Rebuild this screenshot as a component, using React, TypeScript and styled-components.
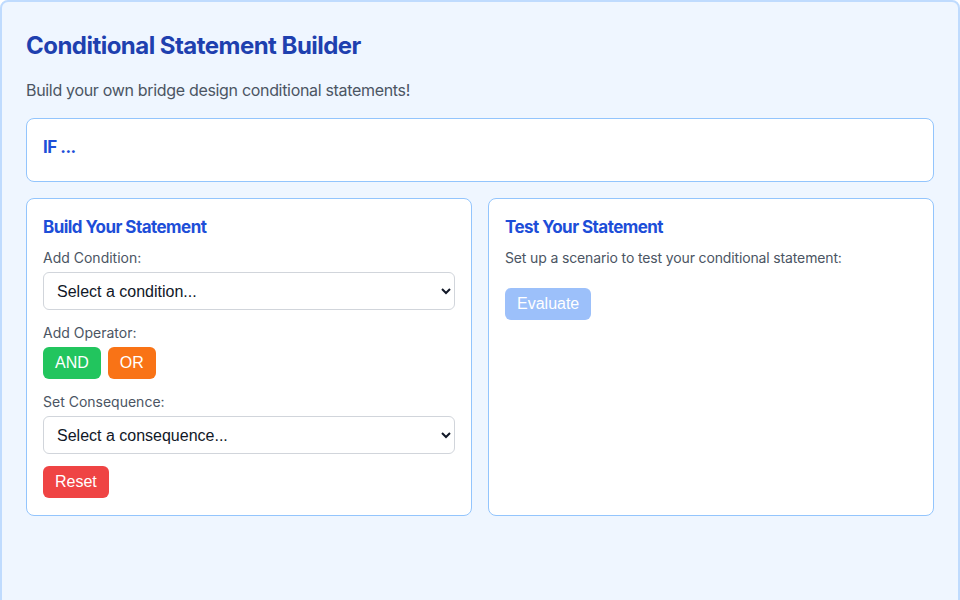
import React, {useState} from "react";
import styled, {createGlobalStyle} from "styled-components";

const GlobalStyle = createGlobalStyle`
    * { box-sizing: border-box; }
    body {
        margin: 0;
        font-family: Inter, "Noto Sans", "Liberation Sans", sans-serif;
        background: #ffffff;
    }
`;

// native controls keep the system (Helvetica-like) face, as in the original
const controlFont = `"Liberation Sans", Arial, sans-serif`;

const App: React.FC = () => {
    const [condition, setCondition] = useState("");
    const [consequence, setConsequence] = useState("");

    return (
        <>
            <GlobalStyle/>
            <Wrapper>
                <Title>Conditional Statement Builder</Title>
                <Intro>Build your own bridge design conditional statements!</Intro>

                <StatementBox>
                    <StatementText>IF ...</StatementText>
                </StatementBox>

                <Columns>
                    <Card>
                        <CardTitle>Build Your Statement</CardTitle>
                        <Field>
                            <Label>Add Condition:</Label>
                            <Select value={condition} onChange={e => setCondition(e.target.value)}>
                                <option value="">Select a condition...</option>
                                <option value="span">Span is longer than 50m</option>
                                <option value="load">Load is heavy</option>
                            </Select>
                        </Field>
                        <Field>
                            <Label>Add Operator:</Label>
                            <ButtonRow>
                                <Button $bg="#22c55e">AND</Button>
                                <Button $bg="#f97316">OR</Button>
                            </ButtonRow>
                        </Field>
                        <Field>
                            <Label>Set Consequence:</Label>
                            <Select value={consequence} onChange={e => setConsequence(e.target.value)}>
                                <option value="">Select a consequence...</option>
                                <option value="arch">Use an arch bridge</option>
                                <option value="suspension">Use a suspension bridge</option>
                            </Select>
                        </Field>
                        <Button $bg="#ef4444" onClick={() => {setCondition(""); setConsequence("");}}>Reset</Button>
                    </Card>

                    <Card>
                        <CardTitle>Test Your Statement</CardTitle>
                        <Hint>Set up a scenario to test your conditional statement:</Hint>
                        <Button $bg="#3b82f6" disabled>Evaluate</Button>
                    </Card>
                </Columns>
            </Wrapper>
        </>
    );
};

const Wrapper = styled.div`
    min-height: 640px;
    padding: 28px 24px 24px;
    background: #eff6ff;
    border: 2px solid #bfdbfe;
    border-radius: 8px;
`;

const Title = styled.h1`
    margin: 0 0 16px;
    font-size: 24px;
    line-height: 32px;
    font-weight: 700;
    letter-spacing: -0.022em;
    color: #1e40af;
`;

const Intro = styled.p`
    margin: 0 0 16px;
    font-size: 16px;
    line-height: 24px;
    letter-spacing: -0.02em;
    color: #4b5563;
`;

const StatementBox = styled.div`
    background: #ffffff;
    border: 1px solid #93c5fd;
    border-radius: 8px;
    padding: 16px 16px 22px;
    margin-bottom: 16px;
`;

const StatementText = styled.div`
    font-size: 17px;
    line-height: 24px;
    font-weight: 700;
    letter-spacing: -0.03em;
    color: #1d4ed8;
`;

const Columns = styled.div`
    display: grid;
    grid-template-columns: 1fr 1fr;
    gap: 16px;
`;

const Card = styled.div`
    background: #ffffff;
    border: 1px solid #93c5fd;
    border-radius: 8px;
    padding: 14px 16px 17px;
    display: flex;
    flex-direction: column;
    align-items: flex-start;
`;

const CardTitle = styled.h2`
    margin: 0 0 7px;
    font-size: 17px;
    line-height: 28px;
    font-weight: 700;
    letter-spacing: -0.032em;
    color: #1d4ed8;
`;

const Field = styled.div`
    width: 100%;
    margin-bottom: 13px;

    &:last-of-type {
        margin-bottom: 12px;
    }
`;

const Label = styled.div`
    font-size: 14px;
    line-height: 20px;
    color: #4b5563;
    margin-bottom: 4px;
`;

const Select = styled.select`
    width: 100%;
    height: 38px;
    padding: 0 8px 0 9px;
    font-family: ${controlFont};
    font-size: 16px;
    color: #111827;
    background: #ffffff;
    border: 1px solid #d1d5db;
    border-radius: 6px;
`;

const ButtonRow = styled.div`
    display: flex;
    gap: 7px;
`;

const Button = styled.button<{ $bg: string }>`
    height: 32px;
    padding: 0 12px;
    border: none;
    border-radius: 6px;
    background: ${p => p.$bg};
    color: #ffffff;
    font-family: ${controlFont};
    font-size: 16px;
    cursor: pointer;

    &:disabled {
        opacity: 0.5;
        cursor: not-allowed;
    }
`;

const Hint = styled.p`
    margin: 0 0 20px;
    font-size: 14px;
    line-height: 20px;
    letter-spacing: -0.01em;
    color: #4b5563;
`;

export default App;
